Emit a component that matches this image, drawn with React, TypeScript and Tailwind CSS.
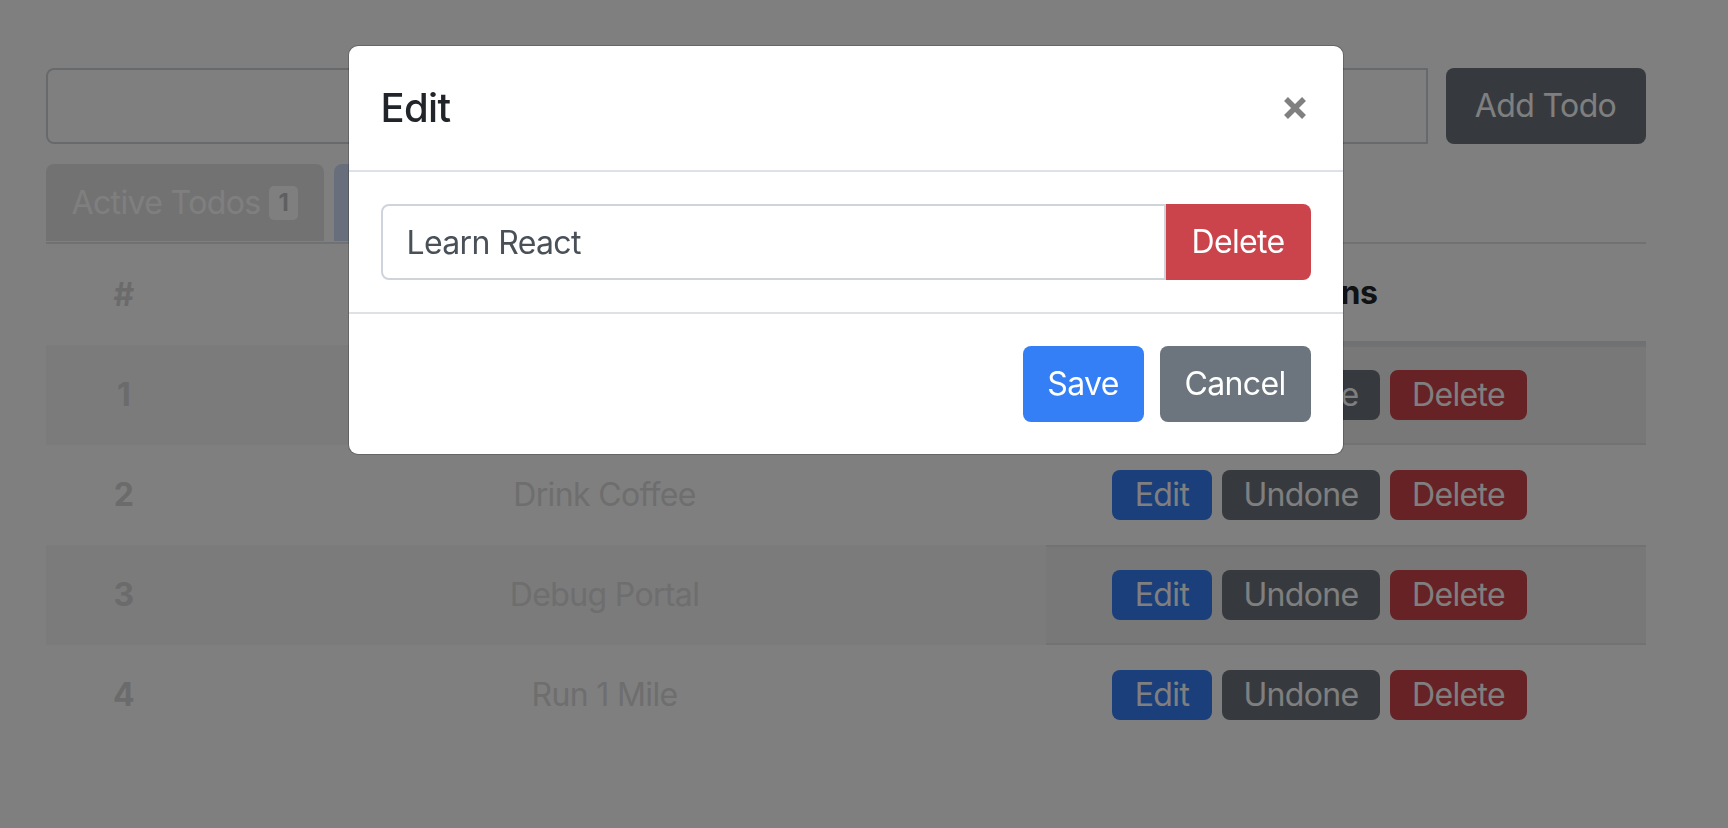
import React from "react";

const todos = [
  { id: 1, text: "Learn React" },
  { id: 2, text: "Drink Coffee" },
  { id: 3, text: "Debug Portal" },
  { id: 4, text: "Run 1 Mile" },
];

function RowButtons({ shaded }: { shaded: boolean }) {
  return (
    <div
      className={
        "flex h-full items-center justify-center gap-[10px] pr-[52px] " +
        (shaded ? "border-y-2 border-[#e4e4e4] bg-[#f1f1f1]" : "")
      }
    >
      <button className="h-[50px] w-[100px] rounded-[8px] bg-[#347ef6] leading-[48px] text-white">
        Edit
      </button>
      <button className="h-[50px] w-[158px] rounded-[8px] bg-[#6c757d] leading-[48px] text-white">
        Undone
      </button>
      <button className="h-[50px] w-[137px] rounded-[8px] bg-[#cc444b] leading-[48px] text-white">
        Delete
      </button>
    </div>
  );
}

export default function App() {
  return (
    <div className="relative h-[828px] w-full overflow-hidden bg-white font-['Inter','Liberation_Sans',sans-serif] text-[32px] tracking-[-0.02em] text-[#212529]">
      {/* page behind the modal */}
      <div className="w-[1691px] pt-[68px]">
        <div className="mx-auto w-[1600px]">
          <div className="flex gap-[18px]">
            <input
              className="h-[76px] flex-1 rounded-l-[8px] border-2 border-[#ced4da] px-[24px] outline-none"
              defaultValue=""
            />
            <button className="h-[76px] w-[200px] rounded-[8px] bg-[#6c757d] text-white">
              Add Todo
            </button>
          </div>

          {/* tabs */}
          <div className="mt-[20px] flex h-[80px] items-start gap-[10px] border-b-2 border-[#dee2e6]">
            <div className="flex h-[77px] w-[278px] items-center gap-[9px] whitespace-nowrap rounded-t-[8px] bg-[#e4e4e6] px-[26px] text-white">
              <span>Active Todos</span>
              <span className="flex h-[34px] w-[32px] items-center justify-center rounded-[5px] bg-white text-[24px] font-bold text-[#bebebe]">
                1
              </span>
            </div>
            <div className="flex h-[77px] items-center gap-[9px] whitespace-nowrap rounded-t-[8px] bg-[#d2ddf8] px-[26px] text-[#2a5bd0]">
              <span>Completed Todos</span>
              <span className="flex h-[34px] w-[32px] items-center justify-center rounded-[5px] bg-white text-[24px] font-bold">
                3
              </span>
            </div>
          </div>

          {/* table */}
          <div className="grid h-[101px] grid-cols-[156px_844px_600px] font-bold">
            <div className="flex items-center justify-center text-[#d6d6d6]">#</div>
            <div className="flex items-center justify-center pr-[38px]">Todo</div>
            <div className="flex items-center justify-center border-b-4 border-[#dee2e6] pr-[52px]">
              Actions
            </div>
          </div>
          {todos.map((t, i) => (
            <div
              key={t.id}
              className={
                "grid h-[100px] grid-cols-[156px_844px_600px] " +
                (i % 2 === 0 ? "bg-[#f6f6f6]" : "bg-white")
              }
            >
              <div className="flex items-center justify-center font-bold text-[#d6d6d6]">
                {t.id}
              </div>
              <div className="flex items-center justify-center pr-[38px] text-[#dcdcdc]">
                {t.text}
              </div>
              <RowButtons shaded={i % 2 === 0} />
            </div>
          ))}
        </div>
      </div>

      {/* backdrop */}
      <div className="fixed inset-0 bg-black/50" />

      {/* modal */}
      <div className="fixed inset-0">
        <div className="w-[1691px] pt-[45px]">
          <div className="mx-auto w-[996px] rounded-[10px] border border-black/20 bg-white bg-clip-padding">
            <div className="flex items-start justify-between border-b-2 border-[#dee2e6] p-[32px]">
              <h5 className="text-[40px] font-medium leading-[60px] text-[#212529]">
                Edit
              </h5>
              <button className="mr-[4px] flex h-[60px] items-center">
                <svg width="24" height="24" viewBox="0 0 24 24">
                  <path
                    d="M3 3 L21 21 M21 3 L3 21"
                    stroke="#808080"
                    strokeWidth="5.5"
                    fill="none"
                  />
                </svg>
              </button>
            </div>

            <div className="p-[32px]">
              <div className="flex">
                <input
                  className="h-[76px] flex-1 rounded-l-[8px] border-2 border-[#ced4da] px-[24px] tracking-[-0.02em] text-[#495057] outline-none"
                  defaultValue="Learn React"
                />
                <button className="h-[76px] w-[145px] rounded-r-[8px] bg-[#cc444b] text-white">
                  Delete
                </button>
              </div>
            </div>

            <div className="flex justify-end gap-[16px] border-t-2 border-[#dee2e6] p-[32px]">
              <button className="h-[76px] w-[121px] rounded-[8px] bg-[#347ef6] text-white">
                Save
              </button>
              <button className="h-[76px] w-[151px] rounded-[8px] bg-[#6c757d] text-white">
                Cancel
              </button>
            </div>
          </div>
        </div>
      </div>
    </div>
  );
}
